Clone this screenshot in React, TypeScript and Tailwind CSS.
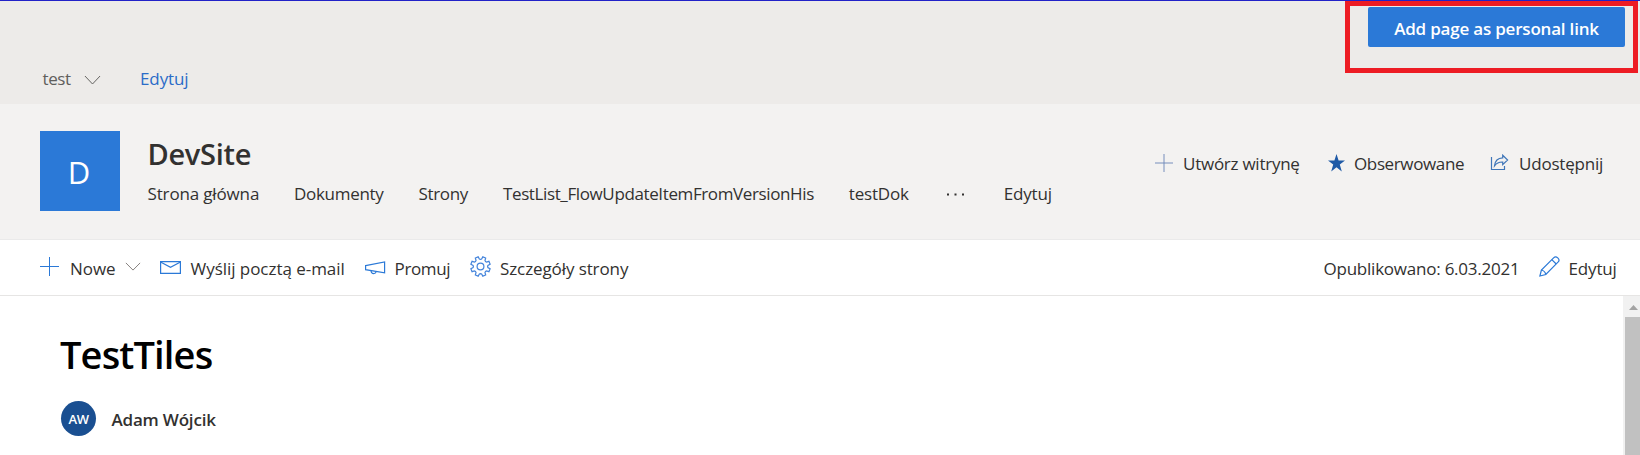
import type { ReactNode } from "react";

type IconProps = { className?: string };

function Chevron({ className }: IconProps) {
  return (
    <svg className={className} viewBox="0 0 18 10" fill="none" stroke="currentColor" preserveAspectRatio="none">
      <path d="M1 1l8 8 8-8" />
    </svg>
  );
}

function Plus({ className }: IconProps) {
  return (
    <svg className={className} viewBox="0 0 19 19" fill="none" stroke="currentColor">
      <path d="M0 9.5h19M9.5 0v19" />
    </svg>
  );
}

function Star({ className }: IconProps) {
  return (
    <svg className={className} viewBox="0 0 17 18" fill="currentColor">
      <path d="M8.5 0l2.100 6.600H17l-5.200 4 2 6.900-5.300-4.200-5.300 4.200 2-6.900L0 6.600h6.400z" />
    </svg>
  );
}

function Share({ className }: IconProps) {
  return (
    <svg className={className} viewBox="0 0 19 17" fill="none" stroke="currentColor" strokeWidth="1.200">
      <path d="M1.500 3v12.500h13V12" />
      <path d="M12.700 1.200L17.600 6l-4.900 4.600V8C9.300 7.900 6.500 9 4.500 11.800 5 6.700 8 4 12.700 3.800z" />
    </svg>
  );
}

function Mail({ className }: IconProps) {
  return (
    <svg className={className} viewBox="0 0 21 13" fill="none" stroke="currentColor" strokeWidth="1.200">
      <path d="M.6.600h19.800v11.800H.6z" />
      <path d="M1 1.200l9.500 5 9.500-5" />
    </svg>
  );
}

function Megaphone({ className }: IconProps) {
  return (
    <svg className={className} viewBox="0 0 21 14" fill="none" stroke="currentColor" strokeWidth="1.200">
      <path d="M.6 4.600L19.600.900v11L.6 8.700z" />
      <path d="M6 9.700c.2 1.800 1.200 2.900 2.600 2.900s2.300-.8 2.700-2" />
    </svg>
  );
}

function Gear({ className }: IconProps) {
  const point = (radius: number, degrees: number) => {
    const a = (degrees * Math.PI) / 180;
    return `${(10.5 + radius * Math.cos(a)).toFixed(2)} ${(10.5 + radius * Math.sin(a)).toFixed(2)}`;
  };
  const outline = Array.from({ length: 8 }, (_, i) => {
    const c = i * 45 + 22.5;
    return [point(7.5, c - 14), point(9.9, c - 9), point(9.9, c + 9), point(7.5, c + 14), point(7.1, c + 22.5)];
  }).flat();
  return (
    <svg className={className} viewBox="0 0 21 21" fill="none" stroke="currentColor" strokeWidth="1.200">
      <path d={`M${outline.join("L")}Z`} />
      <circle cx="10.5" cy="10.5" r="3.400" />
    </svg>
  );
}

function Pencil({ className }: IconProps) {
  return (
    <svg className={className} viewBox="0 0 21 21" fill="none" stroke="currentColor" strokeWidth="1.200">
      <path d="M.9 20l1.500-6L14.600 1.800a2.900 2.900 0 0 1 4.100 0l.3.300a2.900 2.900 0 0 1 0 4.100L6.800 18.500z" />
      <path d="M2.400 14q3.500.8 4.400 4.500M12.800 3.600l4.400 4.400" />
    </svg>
  );
}

function Label({ className, children }: { className: string; children: ReactNode }) {
  return <span className={`shrink-0 whitespace-nowrap ${className}`}>{children}</span>;
}

export default function App() {
  return (
    <div className="relative flex h-[455px] w-[1640px] flex-col overflow-hidden bg-white font-['Open_Sans','Noto_Sans',sans-serif] text-[17px] leading-6 text-[#323130]">
      <div className="flex h-[104px] shrink-0 items-start border-t border-[#2222c8] bg-[#edebe9] pl-[42.5px] pt-[66px] text-[#605e5c]">
        <Label className="w-[41px] tracking-[-0.4px]">test</Label>
        <Chevron className="mt-[8px] h-[10px] w-[17px] shrink-0" />
        <Label className="ml-[39.5px] tracking-[-0.1px] text-[#2b6cc8]">Edytuj</Label>
      </div>

      <header className="flex h-[136px] shrink-0 items-start border-b border-[#eaeaea] bg-[#f3f2f1] pl-[40px]">
        <div className="mt-[27px] flex h-20 w-20 shrink-0 items-center justify-center bg-[#2b79d7] pr-[2px] pt-[2px] text-[31px] leading-[40px] text-white">
          D
        </div>
        <div className="ml-[27.5px] mt-[30px] w-[1003.5px] shrink-0">
          <h1 className="text-[29px] font-semibold leading-[40px] tracking-[-0.3px]">DevSite</h1>
          <nav className="mt-[8px] flex">
            <Label className="w-[146.5px] tracking-[-0.15px]">Strona główna</Label>
            <Label className="w-[124.5px] tracking-[-0.3px]">Dokumenty</Label>
            <Label className="w-[84.5px] tracking-[-0.35px]">Strony</Label>
            <Label className="w-[345.8px] tracking-[-0.38px]">TestList_FlowUpdateItemFromVersionHis</Label>
            <Label className="w-[98.7px] tracking-[-0.2px]">testDok</Label>
            <svg className="mt-[11px] h-[3px] w-[17px] shrink-0 fill-[#323130]" viewBox="0 0 17 3">
              <path d="M0 .5h2v2H0zM7.500.5h2v2h-2zM15 .5h2v2h-2z" />
            </svg>
            <Label className="ml-[39.3px] tracking-[-0.2px]">Edytuj</Label>
          </nav>
        </div>
        <div className="mt-[48px] flex">
          <Plus className="ml-[4px] mt-[2px] h-[18px] w-[18px] shrink-0 text-[#6f88b8]" />
          <Label className="ml-[10px] w-[144.5px] tracking-[-0.25px]">Utwórz witrynę</Label>
          <Star className="mt-[2px] h-[18px] w-[17px] shrink-0 text-[#1f5aa6]" />
          <Label className="ml-[9.5px] w-[136px] tracking-[-0.37px]">Obserwowane</Label>
          <Share className="mt-[2px] h-[17px] w-[19px] shrink-0 text-[#3f76b8]" />
          <Label className="ml-[10px] tracking-[-0.2px]">Udostępnij</Label>
        </div>
      </header>

      <div className="flex h-[56px] shrink-0 items-start border-b border-[#e6e5e4] pl-[40px] pr-[23px] pt-[17px]">
        <Plus className="h-[19px] w-[19px] shrink-0 text-[#2b79d7]" />
        <Label className="ml-[11px] w-[55px] tracking-[-0.07px]">Nowe</Label>
        <Chevron className="mt-[5px] h-[9px] w-[16px] shrink-0 text-[#77726f]" />
        <Mail className="ml-[19px] mt-[4px] h-[13px] w-[21px] shrink-0 text-[#2b79d7]" />
        <Label className="ml-[9.5px] w-[174.5px] tracking-[-0.04px]">Wyślij pocztą e-mail</Label>
        <Megaphone className="mt-[4px] h-[14px] w-[21px] shrink-0 text-[#2b79d7]" />
        <Label className="ml-[8.5px] w-[75px] tracking-[-0.35px]">Promuj</Label>
        <Gear className="-mt-[1px] h-[21px] w-[21px] shrink-0 text-[#4484db]" />
        <Label className="ml-[9.5px] tracking-[-0.1px]">Szczegóły strony</Label>
        <Label className="ml-auto w-[215px] tracking-[-0.23px]">Opublikowano: 6.03.2021</Label>
        <Pencil className="-mt-[1px] h-[21px] w-[21px] shrink-0 text-[#2b79d7]" />
        <Label className="ml-[9px] w-[48.5px] tracking-[-0.15px]">Edytuj</Label>
      </div>

      <div className="flex min-h-0 flex-1">
        <main className="flex-1 pl-[60px] pt-[31px]">
          <h2 className="text-[38px] font-semibold leading-[54px] tracking-[-0.85px] text-black">TestTiles</h2>
          <div className="ml-[1px] mt-[20px] flex items-start">
            <div className="flex h-[35px] w-[35px] items-center justify-center rounded-full bg-[#1a4f91] text-[13px] font-semibold tracking-[-0.4px] text-white">
              AW
            </div>
            <Label className="ml-[15.5px] mt-[7px] font-semibold tracking-[-0.2px]">Adam Wójcik</Label>
          </div>
        </main>
        <div className="flex w-[17px] shrink-0 flex-col bg-[#f1f1f1] pl-[2px]">
          <svg className="ml-[4px] mt-[9px] h-[5px] w-[9px] shrink-0 fill-[#a3a3a3]" viewBox="0 0 9 5">
            <path d="M0 5l4.500-5L9 5z" />
          </svg>
          <div className="mt-[7px] flex-1 bg-[#c1c1c1]" />
        </div>
      </div>

      <div className="absolute left-[1345px] top-[1px] h-[72px] w-[293px] border-[5px] border-[#ed1c24] pl-[18px] pt-[1px]">
        <button className="h-10 w-[257px] rounded-[2px] bg-[#2b79d7] pt-[3px] font-semibold tracking-[-0.2px] text-white">
          Add page as personal link
        </button>
      </div>
    </div>
  );
}
